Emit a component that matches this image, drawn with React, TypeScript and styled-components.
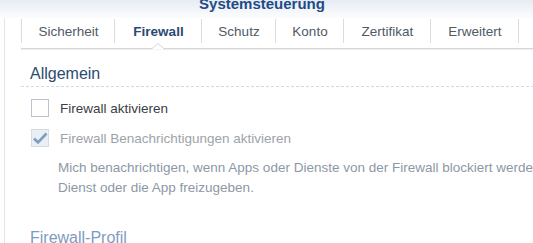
import React from "react";
import styled, { createGlobalStyle } from "styled-components";

const Global = createGlobalStyle`
  html, body { margin: 0; padding: 0; background: #fff; }
  body { font-family: "Liberation Sans", Arial, sans-serif; overflow: hidden; }
`;

const Page = styled.div`
  width: 533px;
  height: 243px;
  overflow: hidden;
  display: flex;
  flex-direction: column;
  background: #fff;
`;

const TitleBar = styled.div`
  height: 18px;
  flex: none;
  display: flex;
  justify-content: center;
  align-items: flex-start;
  background: linear-gradient(#e6ecf3, #f6f8fb 70%, #fbfcfd);
  overflow: hidden;
`;

const Title = styled.div`
  font-size: 15px;
  font-weight: bold;
  line-height: 16px;
  margin-top: -4px;
  margin-right: 9px;
  color: #1f4b87;
`;

const Body = styled.div`
  flex: 1;
  display: flex;
  flex-direction: column;
  margin-left: 4px;
  border-left: 1px solid #e2e4e6;
  padding-left: 16px;
`;

const TabBar = styled.div`
  display: flex;
  flex: none;
  height: 31px;
  padding-top: 1px;
  box-sizing: border-box;
  border-bottom: 1px solid #d3d6d9;
  box-shadow: 0 1px 1px rgba(0, 0, 0, 0.06);
`;

const Tab = styled.div<{ $active?: boolean; $w?: number }>`
  position: relative;
  box-sizing: border-box;
  flex: none;
  width: ${(p) => (p.$w ? `${p.$w}px` : "auto")};
  height: 24px;
  padding: 0 0 0 1px;
  border-left: 1px solid #d5dde6;
  display: flex;
  align-items: center;
  justify-content: center;
  font-size: 13.5px;
  color: ${(p) => (p.$active ? "#2a4a72" : "#4f5a66")};
  font-weight: ${(p) => (p.$active ? "bold" : "normal")};
  white-space: nowrap;
`;

const Caret = styled.svg`
  position: absolute;
  left: 50%;
  bottom: -7px;
  margin-left: -7px;
  width: 14px;
  height: 7px;
`;

const Content = styled.div`
  display: flex;
  flex-direction: column;
`;

const Spacer = styled.div<{ $h: number }>`
  height: ${(p) => p.$h}px;
  flex: none;
`;

const SectionHeader = styled.div<{ $muted?: boolean }>`
  font-size: 16px;
  line-height: 20px;
  padding: 0 0 0 9px;
  color: ${(p) => (p.$muted ? "#7f9cc0" : "#2c4a70")};
`;

const Divider = styled.div`
  height: 1px;
  margin-top: 2px;
  background-image: linear-gradient(to right, #cfdbe6 3px, transparent 3px);
  background-size: 5px 1px;
`;

const Row = styled.label<{ $disabled?: boolean }>`
  display: flex;
  align-items: center;
  gap: 11px;
  padding-left: 10px;
  height: 18px;
  font-size: 13.5px;
  color: ${(p) => (p.$disabled ? "#9da3a9" : "#3b4046")};
`;

const Box = styled.span<{ $checked?: boolean }>`
  width: 16px;
  height: 16px;
  flex: none;
  border: 1px solid ${(p) => (p.$checked ? "#d3dbe3" : "#b9c4cf")};
  background: ${(p) => (p.$checked ? "#eaeff4" : "#fff")};
  display: flex;
  align-items: center;
  justify-content: center;
`;

const Description = styled.p`
  margin: 0;
  padding-left: 37px;
  font-size: 13.5px;
  line-height: 20px;
  color: #8d98a5;
  white-space: nowrap;
`;

const tabs: { label: string; w: number }[] = [
  { label: "Sicherheit", w: 93 },
  { label: "Firewall", w: 87 },
  { label: "Schutz", w: 74 },
  { label: "Konto", w: 68 },
  { label: "Zertifikat", w: 87 },
  { label: "Erweitert", w: 88 },
];

export default function App() {
  return (
    <>
      <Global />
      <Page>
        <TitleBar>
          <Title>Systemsteuerung</Title>
        </TitleBar>
        <Body>
          <TabBar>
            {tabs.map((t) => (
              <Tab key={t.label} $w={t.w} $active={t.label === "Firewall"}>
                {t.label}
                {t.label === "Firewall" && (
                  <Caret viewBox="0 0 14 7">
                    <path d="M0 6.5 L7 0.5 L14 6.5" fill="#fff" stroke="#d3d6d9" strokeWidth="1" />
                  </Caret>
                )}
              </Tab>
            ))}
            <Tab $w={20} />
          </TabBar>
          <Content>
            <Spacer $h={15} />
            <SectionHeader>Allgemein</SectionHeader>
            <Divider />
            <Spacer $h={12} />
            <Row>
              <Box />
              Firewall aktivieren
            </Row>
            <Spacer $h={12} />
            <Row $disabled>
              <Box $checked>
                <svg width="16" height="14" viewBox="0 0 16 14">
                  <path d="M2 7.5 L6 11.5 L14.5 2.5" fill="none" stroke="#7f9cc4" strokeWidth="2.6" />
                </svg>
              </Box>
              Firewall Benachrichtigungen aktivieren
            </Row>
            <Spacer $h={11} />
            <Description>
              Mich benachrichtigen, wenn Apps oder Dienste von der Firewall blockiert werden, um den
              <br />
              Dienst oder die App freizugeben.
            </Description>
            <Spacer $h={30} />
            <SectionHeader $muted>Firewall-Profil</SectionHeader>
          </Content>
        </Body>
      </Page>
    </>
  );
}
